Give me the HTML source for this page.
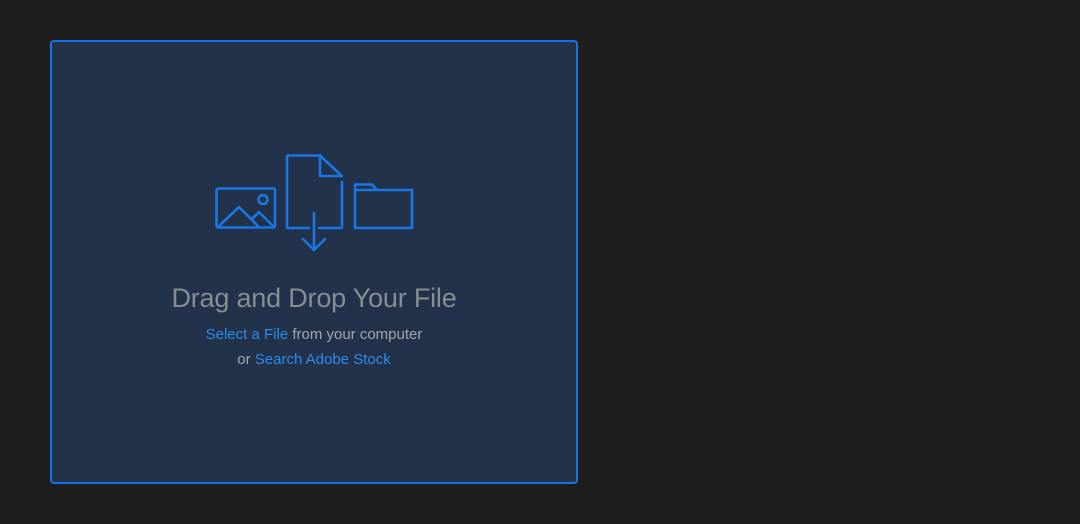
<!DOCTYPE html>
<html><head><style>
html,body{margin:0;padding:0;background:#1e1e1e;width:1080px;height:524px;overflow:hidden;font-family:"Liberation Sans",sans-serif}
.box{position:absolute;left:50px;top:40px;width:524px;height:440px;border:2px solid #1473e6;border-radius:4px;background:#21324a}
svg{position:absolute;left:0;top:0}
.t{position:absolute;left:50px;width:528px;text-align:center}
.h{top:283px;font-size:27px;color:#878d94;letter-spacing:-0.2px}
.s{font-size:15px;color:#a3a8ad}
.a{color:#2d8ceb}
</style></head><body>
<div class="box"></div>
<svg width="1080" height="524" fill="none" stroke="#1a76e3" stroke-width="2.6" stroke-linejoin="round" stroke-linecap="round">
<rect x="216.5" y="188.5" width="58.5" height="39" rx="1.5"/>
<circle cx="263" cy="199.5" r="4.5"/>
<path d="M218 227 L239 207 L258 226 M252 219 L259 212 L273 226"/>
<path d="M320 155.5 L288.5 155.5 Q287 155.5 287 157 L287 226.5 Q287 228 288.5 228 L309 228 M319 228 L340.5 228 Q342 228 342 226.5 L342 182"/>
<path d="M320 155.5 L320 176 L342 176 Z"/>
<path d="M314 213 L314 250 M303 239 L314 250 L325 239"/>
<path d="M355 228 L412 228 L412 190 L377 190 L372 184.5 L355 184.5 Z M355 190 L377 190"/>
</svg>
<div class="t h">Drag and Drop Your File</div>
<div class="t s" style="top:326px"><span class="a">Select a File</span> from your computer</div>
<div class="t s" style="top:351px">or <span class="a">Search Adobe Stock</span></div>
</body></html>
